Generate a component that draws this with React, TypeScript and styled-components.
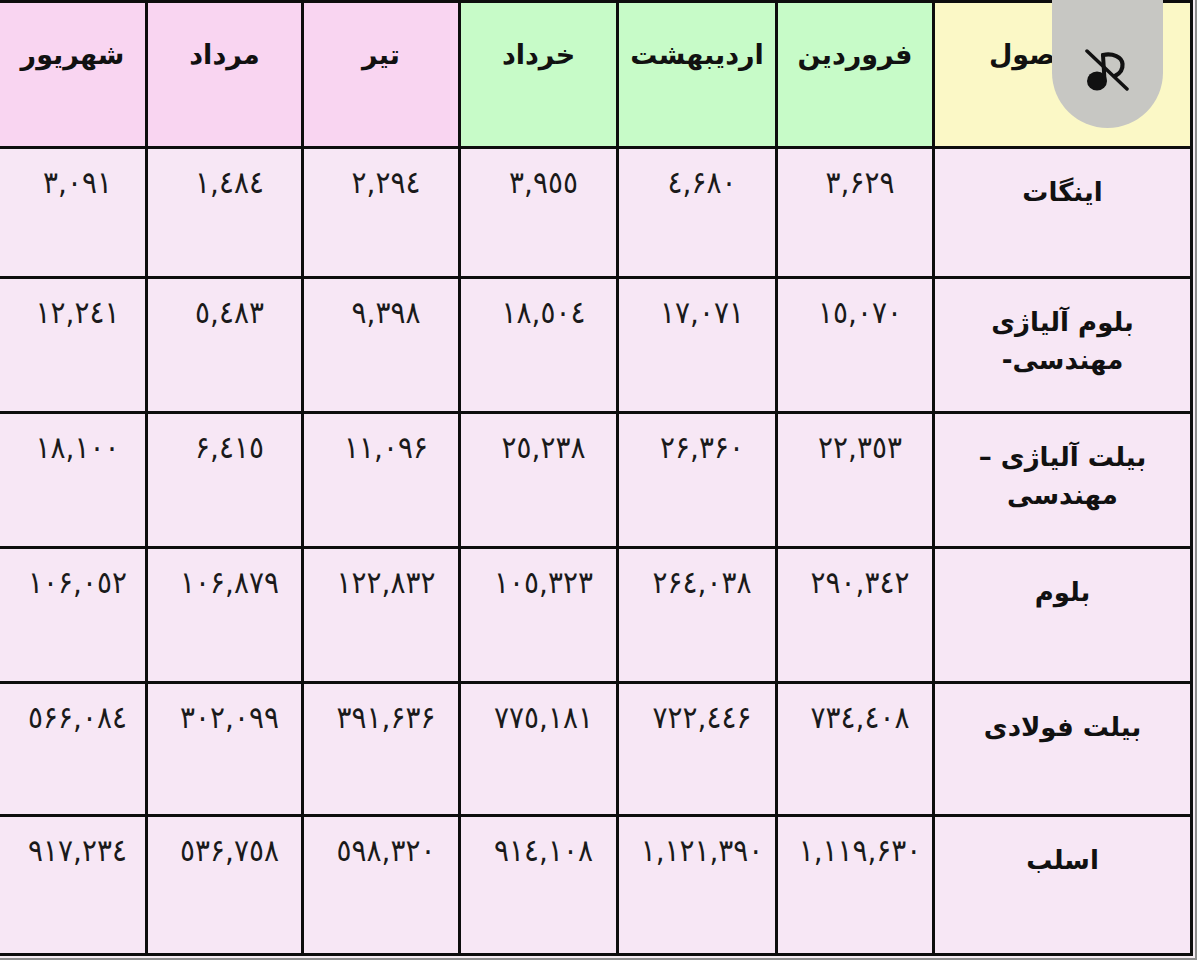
import React from "react";
import styled, { createGlobalStyle } from "styled-components";

type Tone = "yellow" | "green" | "pink";

const GlobalStyle = createGlobalStyle`
  html, body {
    margin: 0;
    padding: 0;
    background: #ffffff;
  }
  body {
    font-family: "DejaVu Sans", "Noto Sans", sans-serif;
    color: #111;
  }
`;

const toneColors: Record<Tone, string> = {
  yellow: "#fbf8c6",
  green: "#c7fbc8",
  pink: "#f9d5f1",
};

const Page = styled.div`
  position: relative;
  width: 1200px;
  height: 971px;
  overflow: hidden;
`;

const Frame = styled.div`
  width: 1197px;
  padding: 0 2px 2px 0;
  border-right: 2px solid #8d8d8d;
  border-bottom: 2px solid #8d8d8d;
  background: #f4ecf2;
  box-sizing: border-box;
`;

const Table = styled.div`
  display: grid;
  direction: rtl;
  grid-template-columns: 255px 154px 156px 155px 154px 153px 145px;
  grid-template-rows: 143px 127px 132px 132px 132px 130px 136px;
  gap: 3px;
  padding: 3px 3px 3px 0;
  width: 1193px;
  box-sizing: border-box;
  background: #0d0d0d;
`;

const HeaderCell = styled.div<{ $tone: Tone }>`
  background: ${(p) => toneColors[p.$tone]};
  display: flex;
  justify-content: center;
  align-items: flex-start;
  padding-top: 36px;
  font-weight: 700;
  font-size: 27px;
  letter-spacing: -0.5px;
`;

const ProductHead = styled(HeaderCell)`
  padding-right: 44px;
`;

const LabelCell = styled.div`
  background: #f7e7f5;
  display: flex;
  justify-content: center;
  align-items: flex-start;
  text-align: center;
  padding-top: 24px;
  font-weight: 700;
  font-size: 26px;
  line-height: 38px;
`;

const NumCell = styled.div`
  background: #f7e7f5;
  display: flex;
  justify-content: center;
  align-items: flex-start;
  padding-top: 15px;
  padding-left: 10px;
  font-family: "DejaVu Sans Condensed", "DejaVu Sans", sans-serif;
  font-size: 31px;
  font-weight: 400;
  letter-spacing: -1.5px;
  color: #1a1a1a;
`;

const MuteBadge = styled.div`
  position: absolute;
  top: -4px;
  right: 37px;
  width: 111px;
  height: 132px;
  border-radius: 0 0 56px 56px;
  background: #c7c7c3;
  display: flex;
  justify-content: center;
  padding-top: 52px;
  box-sizing: border-box;
`;

const MusicOffIcon = () => (
  <svg width="46" height="46" viewBox="0 0 46 46" fill="none">
    <ellipse cx="12" cy="33" rx="10" ry="9.5" fill="#111" />
    <path d="M19.5 32 L18 7" stroke="#111" strokeWidth="4" strokeLinecap="round" />
    <path
      d="M18 7 C28 5 37 9 37.5 16 C38 22 34 26 30 28"
      stroke="#111"
      strokeWidth="4.2"
      strokeLinecap="round"
    />
    <path d="M2 3 L42 41" stroke="#111" strokeWidth="3.5" strokeLinecap="round" />
  </svg>
);

const months = ["فروردین", "اردیبهشت", "خرداد", "تیر", "مرداد", "شهریور"];
const monthTones: Tone[] = ["green", "green", "green", "pink", "pink", "pink"];

const rows: { label: React.ReactNode; values: string[] }[] = [
  {
    label: "اینگات",
    values: ["۳,۶۲۹", "٤,۶۸۰", "۳,۹٥٥", "۲,۲۹٤", "۱,٤۸٤", "۳,۰۹۱"],
  },
  {
    label: (
      <>
        بلوم آلیاژی
        <br />
        مهندسی-
      </>
    ),
    values: ["۱٥,۰۷۰", "۱۷,۰۷۱", "۱۸,٥۰٤", "۹,۳۹۸", "٥,٤۸۳", "۱۲,۲٤۱"],
  },
  {
    label: (
      <>
        بیلت آلیاژی –
        <br />
        مهندسی
      </>
    ),
    values: ["۲۲,۳٥۳", "۲۶,۳۶۰", "۲٥,۲۳۸", "۱۱,۰۹۶", "۶,٤۱٥", "۱۸,۱۰۰"],
  },
  {
    label: "بلوم",
    values: ["۲۹۰,۳٤۲", "۲۶٤,۰۳۸", "۱۰٥,۳۲۳", "۱۲۲,۸۳۲", "۱۰۶,۸۷۹", "۱۰۶,۰٥۲"],
  },
  {
    label: "بیلت فولادی",
    values: ["۷۳٤,٤۰۸", "۷۲۲,٤٤۶", "۷۷٥,۱۸۱", "۳۹۱,۶۳۶", "۳۰۲,۰۹۹", "٥۶۶,۰۸٤"],
  },
  {
    label: "اسلب",
    values: ["۱,۱۱۹,۶۳۰", "۱,۱۲۱,۳۹۰", "۹۱٤,۱۰۸", "٥۹۸,۳۲۰", "٥۳۶,۷٥۸", "۹۱۷,۲۳٤"],
  },
];

const App: React.FC = () => {
  return (
    <Page>
      <GlobalStyle />
      <Frame>
        <Table>
          <ProductHead $tone="yellow">محصول</ProductHead>
          {months.map((m, i) => (
            <HeaderCell key={m} $tone={monthTones[i]}>
              {m}
            </HeaderCell>
          ))}
          {rows.map((row, r) => (
            <React.Fragment key={r}>
              <LabelCell>
                <span>{row.label}</span>
              </LabelCell>
              {row.values.map((v, c) => (
                <NumCell key={c}>
                  <bdi>{v}</bdi>
                </NumCell>
              ))}
            </React.Fragment>
          ))}
        </Table>
      </Frame>
      <MuteBadge>
        <MusicOffIcon />
      </MuteBadge>
    </Page>
  );
};

export default App;
